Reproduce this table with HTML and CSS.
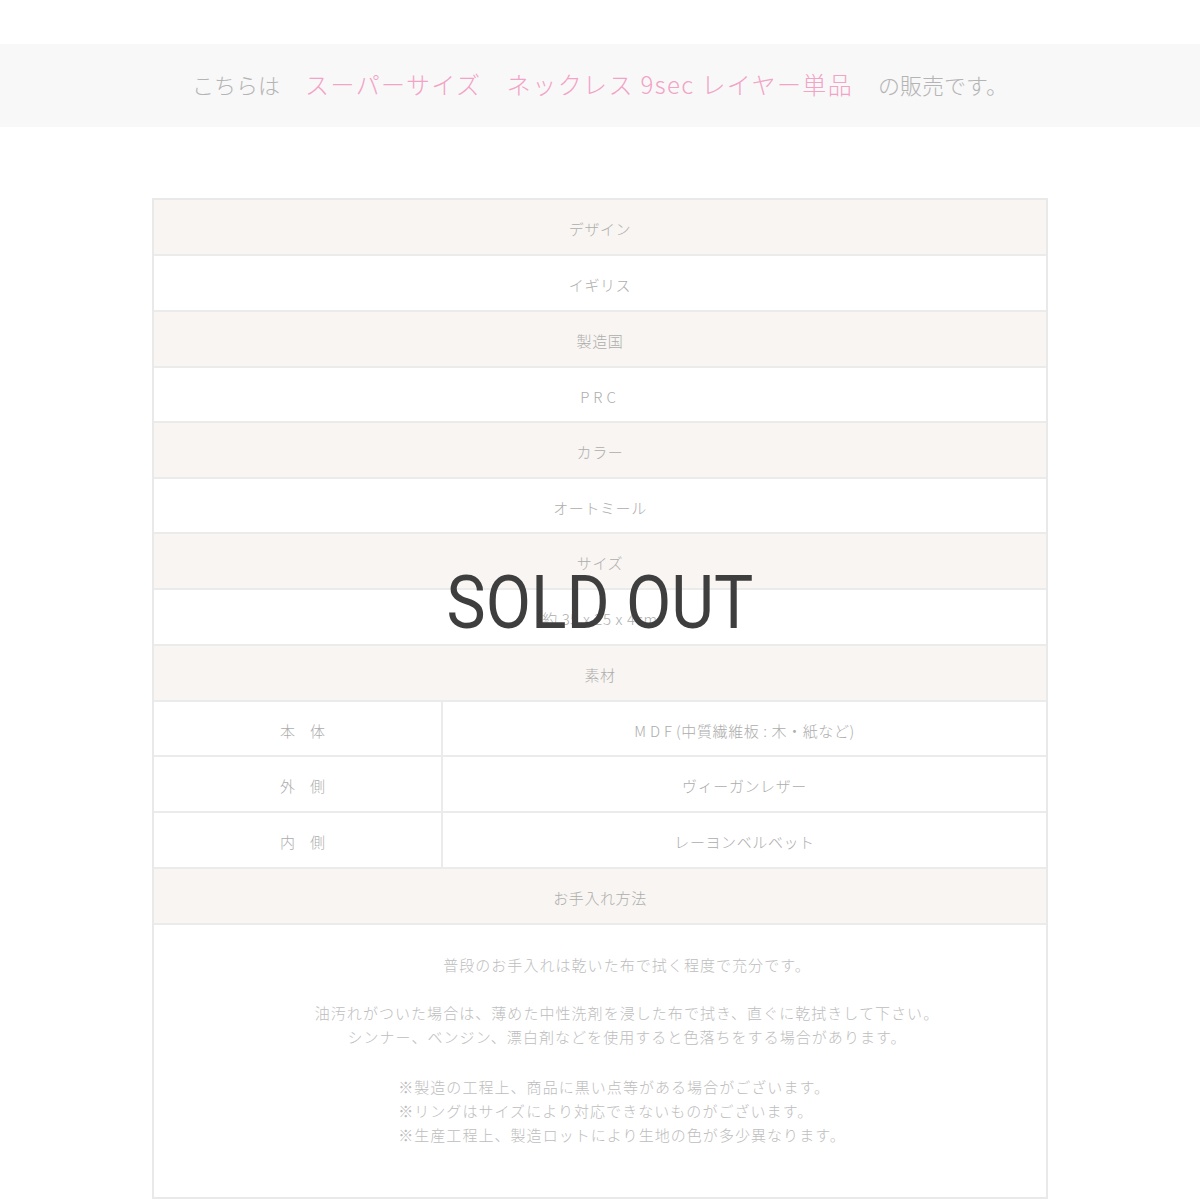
FILE: index.html
```html
<!DOCTYPE html>
<html lang="ja">
<head>
<meta charset="utf-8">
<title>スーパーサイズ ネックレス 9sec レイヤー単品</title>
<link rel="stylesheet" href="styles.css">
</head>
<body>
<div class="page">
  <div class="notice">
    <span class="notice-gray">こちらは</span>
    <span class="notice-pink">スーパーサイズ　ネックレス 9sec レイヤー単品</span>
    <span class="notice-gray">の販売です。</span>
  </div>

  <div class="spec">
    <div class="row head">デザイン</div>
    <div class="row">イギリス</div>
    <div class="row head">製造国</div>
    <div class="row short"><span class="wide">PRC</span></div>
    <div class="row head">カラー</div>
    <div class="row short">オートミール</div>
    <div class="row head">サイズ</div>
    <div class="row">約 35 x 25 x 4cm</div>
    <div class="row head">素材</div>
    <div class="row split short">
      <div class="label">本　体</div>
      <div class="value"><span class="wide">MDF</span>(中質繊維板 : 木・紙など)</div>
    </div>
    <div class="row split">
      <div class="label">外　側</div>
      <div class="value">ヴィーガンレザー</div>
    </div>
    <div class="row split">
      <div class="label">内　側</div>
      <div class="value">レーヨンベルベット</div>
    </div>
    <div class="row head">お手入れ方法</div>
    <div class="care">
      <p>普段のお手入れは乾いた布で拭く程度で充分です。</p>
      <p>油汚れがついた場合は、薄めた中性洗剤を浸した布で拭き、直ぐに乾拭きして下さい。<br>シンナー、ベンジン、漂白剤などを使用すると色落ちをする場合があります。</p>
      <p class="notes">※製造の工程上、商品に黒い点等がある場合がございます。<br>※リングはサイズにより対応できないものがございます。<br>※生産工程上、製造ロットにより生地の色が多少異なります。</p>
    </div>
  </div>

  <div class="soldout">SOLD OUT</div>
</div>
</body>
</html>
```

FILE: styles.css
```css
html, body {
  margin: 0;
  padding: 0;
  background: #ffffff;
}

body {
  font-family: "Noto Sans CJK JP", "Noto Sans", sans-serif;
  font-weight: 300;
  color: #adadad;
}

.page {
  position: relative;
  width: 1200px;
  height: 1200px;
  padding-top: 44px;
  box-sizing: border-box;
  overflow: hidden;
}

.notice {
  height: 83px;
  background: #f8f8f8;
  display: flex;
  align-items: center;
  justify-content: center;
  gap: 25px;
  font-size: 22px;
  padding-bottom: 4px;
  box-sizing: border-box;
}

.notice-gray {
  color: #b4b4b4;
}

.notice-pink {
  color: #f2a3c6;
  font-size: 24px;
  letter-spacing: 1.4px;
}

.spec {
  width: 896px;
  margin: 71px auto 0;
  border: 2px solid #e9e9e9;
  box-sizing: border-box;
  font-size: 15px;
  letter-spacing: 0.6px;
}

.row {
  display: flex;
  align-items: center;
  justify-content: center;
  border-top: 2px solid #ebebeb;
  padding-top: 3px;
  height: 51px;
}

.row.short {
  height: 50px;
}

.row:first-child {
  border-top: none;
}

.row.head {
  background: #f8f5f2;
}

.wide {
  letter-spacing: 4px;
}

.row.split {
  padding-top: 0;
  height: 54px;
  align-items: stretch;
  justify-content: flex-start;
}

.row.split.short {
  height: 53px;
}

.label {
  width: 289px;
  flex: none;
  display: flex;
  align-items: center;
  justify-content: center;
  border-right: 2px solid #ebebeb;
  padding: 3px 0 0 10px;
  box-sizing: border-box;
  letter-spacing: 0;
}

.value {
  flex: 1;
  display: flex;
  align-items: center;
  justify-content: center;
  padding-top: 3px;
}

.care {
  border-top: 2px solid #ebebeb;
  padding: 28px 0 50px 54px;
  text-align: center;
  line-height: 24px;
  letter-spacing: 1.05px;
  color: #bdbdbd;
}

.care p {
  margin: 0 0 24px;
}

.care p.notes {
  display: inline-block;
  text-align: left;
  margin: 2px 0 0 -10px;
}

.soldout {
  position: absolute;
  left: 0;
  right: 0;
  top: 563px;
  text-align: center;
  font-family: Roboto, "Liberation Sans", sans-serif;
  font-weight: 400;
  font-size: 74px;
  line-height: 80px;
  color: #3e3e3e;
  transform: scaleX(0.89);
}
```
